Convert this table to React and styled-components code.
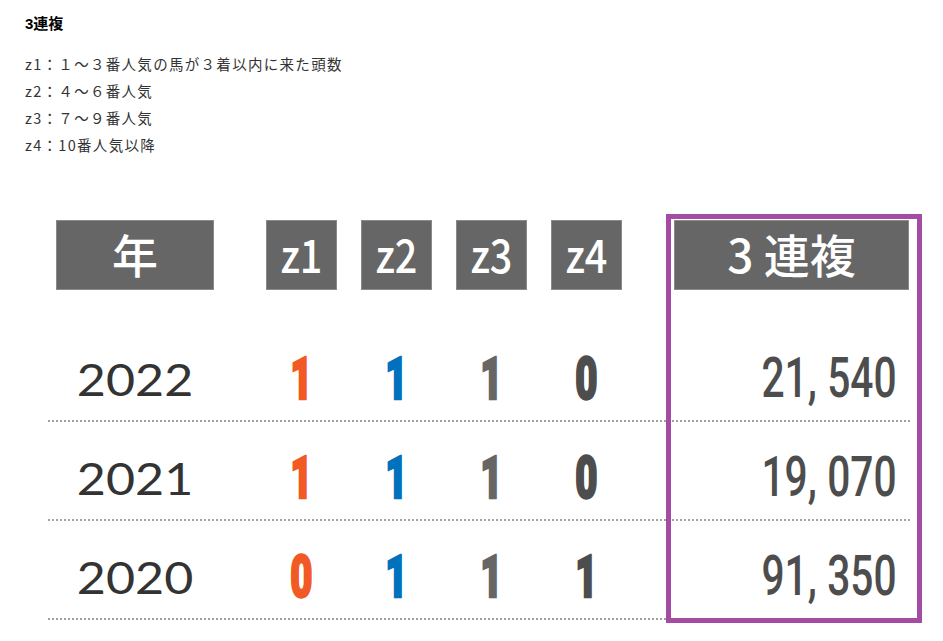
import React from 'react'
import styled, { createGlobalStyle } from 'styled-components'

const GlobalStyle = createGlobalStyle`
  html, body {
    margin: 0;
    padding: 0;
    background: #fff;
  }
  body {
    font-family: "Noto Sans CJK JP", "Noto Sans", sans-serif;
    color: #333;
  }
`

const rows = [
  { year: '2022', z: [1, 1, 1, 0], amount: ['21,', '540'] },
  { year: '2021', z: [1, 1, 1, 0], amount: ['19,', '070'] },
  { year: '2020', z: [0, 1, 1, 1], amount: ['91,', '350'] },
]

const zColors = ['#f15a24', '#0071bc', '#666666', '#4d4d4d']

function App() {
  return (
    <Page>
      <GlobalStyle />
      <Title>3連複</Title>
      <Notes>
        <li>z1：１～３番人気の馬が３着以内に来た頭数</li>
        <li>z2：４～６番人気</li>
        <li>z3：７～９番人気</li>
        <li>z4：10番人気以降</li>
      </Notes>

      <Table>
        <HeadRow>
          <YearCell>
            <HeadBox>年</HeadBox>
          </YearCell>
          {['z1', 'z2', 'z3', 'z4'].map((z) => (
            <ZCell key={z}>
              <HeadBox $small>
                <Squeeze $x={0.86}>{z}</Squeeze>
              </HeadBox>
            </ZCell>
          ))}
          <AmountCell>
            <HeadBox>3 連複</HeadBox>
          </AmountCell>
        </HeadRow>

        {rows.map((r) => (
          <Row key={r.year}>
            <YearCell>
              <Year>
                <Squeeze $x={1.14}>{r.year}</Squeeze>
              </Year>
            </YearCell>
            {r.z.map((v, i) => (
              <ZCell key={i}>
                <Digit $color={zColors[i]}>
                  <Squeeze $x={0.64}>{v}</Squeeze>
                </Digit>
              </ZCell>
            ))}
            <AmountCell>
              <Amount>
                <Squeeze $x={0.74} $origin="right">
                  {r.amount[0]}
                  <Gap />
                  {r.amount[1]}
                </Squeeze>
              </Amount>
            </AmountCell>
          </Row>
        ))}

        <Highlight />
      </Table>
    </Page>
  )
}

export default App

const Page = styled.div`
  width: 943px;
  min-height: 641px;
  padding: 14px 0 0 25px;
  box-sizing: border-box;
`

const Title = styled.div`
  font-family: "Liberation Sans", "Noto Sans CJK JP", sans-serif;
  font-weight: bold;
  font-size: 15px;
  line-height: 20px;
  color: #000;
`

const Notes = styled.ul`
  list-style: none;
  margin: 16px 0 0;
  padding: 0;
  li {
    font-size: 14.5px;
    letter-spacing: 1.3px;
    line-height: 27px;
    color: #333;
  }
`

const Table = styled.div`
  position: relative;
  width: 862px;
  margin: 62px 0 0 23px;
`

const HeadRow = styled.div`
  display: grid;
  grid-template-columns: 206px repeat(4, 95px) 276px;
  height: 70px;
  margin-bottom: 33px;
`

const Row = styled(HeadRow)`
  height: 99px;
  margin: 0;
  padding-top: 14px;
  box-sizing: border-box;
  border-bottom: 2px dotted #a0a0a0;
  align-items: center;
`

const YearCell = styled.div`
  padding-left: 8px;
  width: 158px;
  display: flex;
  justify-content: center;
`

const ZCell = styled.div`
  display: flex;
  justify-content: center;
`

const AmountCell = styled.div`
  padding-left: 40px;
  width: 235px;
  display: flex;
  justify-content: flex-end;
`

const HeadBox = styled.div`
  width: ${(p) => (p.$small ? '71px' : '100%')};
  height: 70px;
  box-sizing: border-box;
  background: #666;
  border: 1px solid #8a8a8a;
  color: #fff;
  font-family: "Noto Sans CJK JP", sans-serif;
  font-weight: 500;
  font-size: 46px;
  line-height: 64px;
  text-align: center;
  white-space: pre;
`

const Squeeze = styled.span`
  display: inline-block;
  white-space: pre;
  transform: scaleX(${(p) => p.$x});
  transform-origin: ${(p) => p.$origin || 'center'};
`

const Gap = styled.span`
  display: inline-block;
  width: 14px;
`

const Year = styled.div`
  font-family: Lato, "Liberation Sans", sans-serif;
  font-weight: 400;
  font-size: 44px;
  line-height: 1;
  color: #333;
`

const Digit = styled.div`
  font-family: Roboto, "Liberation Sans", sans-serif;
  font-weight: 900;
  font-size: 60px;
  line-height: 1;
  color: ${(p) => p.$color};
  -webkit-text-stroke: 2.5px ${(p) => p.$color};
`

const Amount = styled.div`
  padding-right: 12px;
  font-family: Roboto, "Liberation Sans", sans-serif;
  font-weight: 500;
  font-size: 55px;
  line-height: 1;
  color: #4d4d4d;
`

const Highlight = styled.div`
  position: absolute;
  left: 618px;
  top: -6px;
  width: 256px;
  height: 409px;
  box-sizing: border-box;
  border: 5px solid #a44ca3;
  pointer-events: none;
`
